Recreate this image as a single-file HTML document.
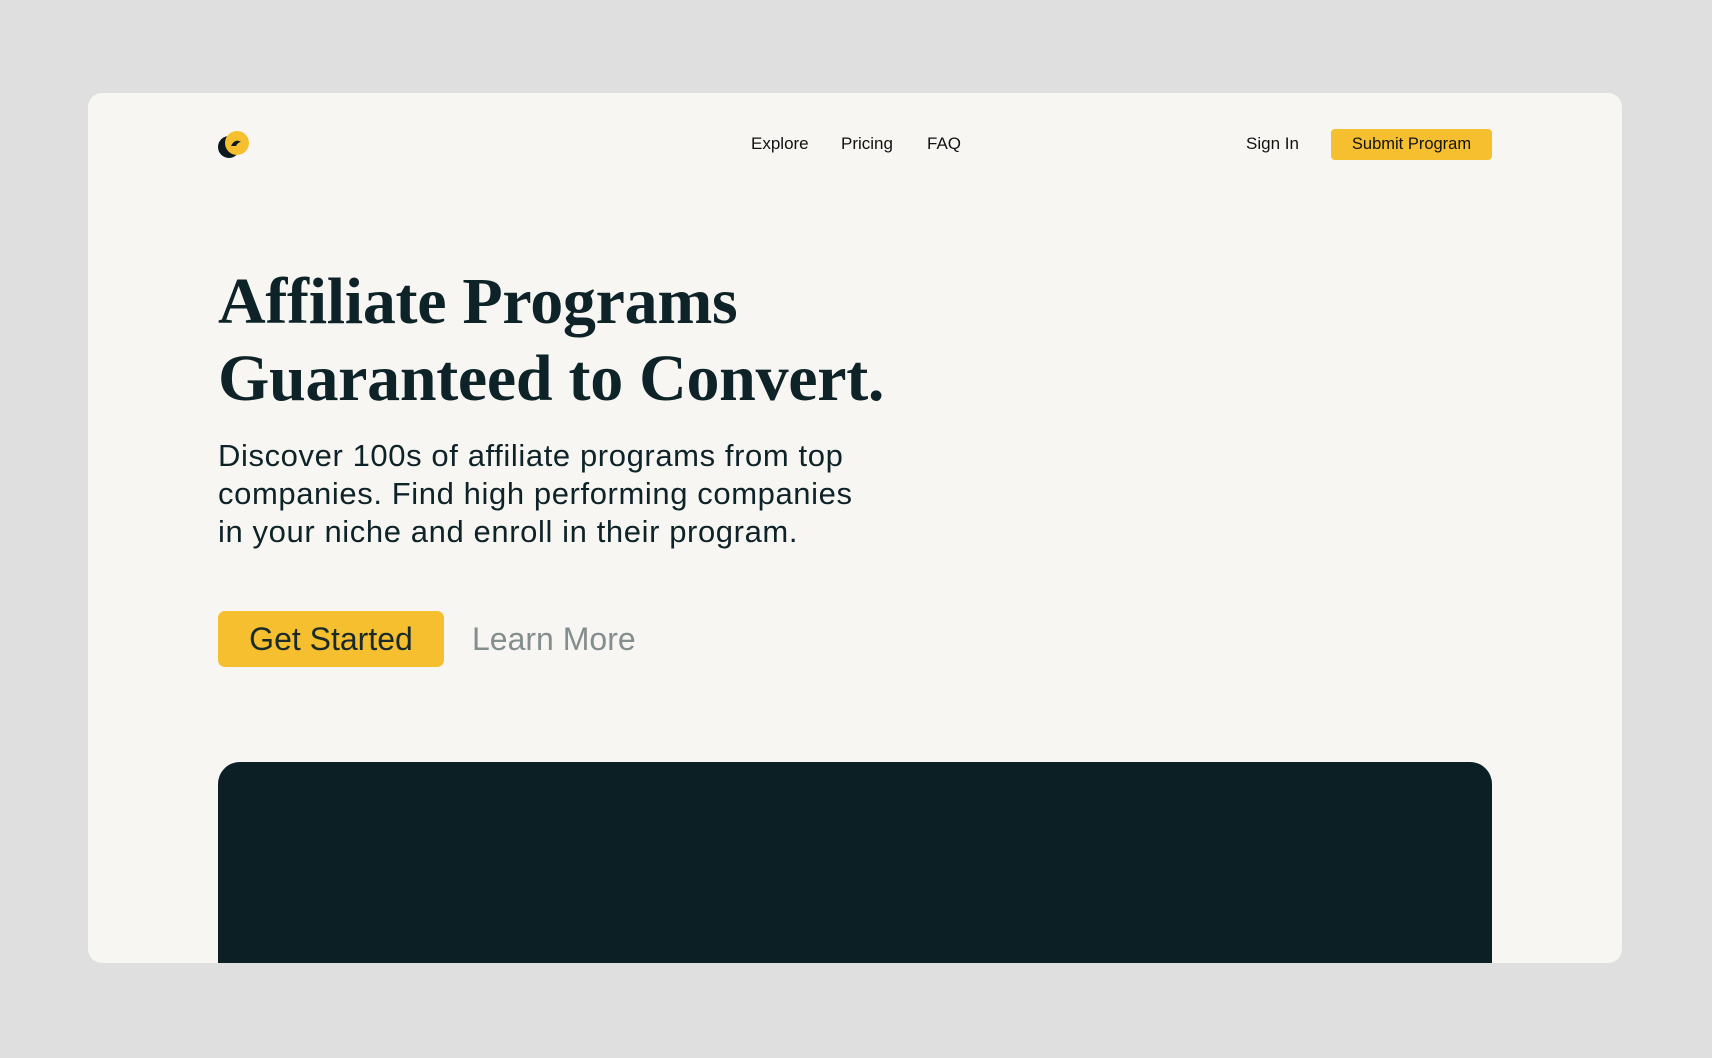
<!DOCTYPE html>
<html><head><meta charset="utf-8"><style>
*{margin:0;padding:0;box-sizing:border-box}
body{width:1712px;height:1058px;background:#dfdfdf;position:relative;overflow:hidden;font-family:"Liberation Sans",sans-serif;color:#0e2328}
.card{position:absolute;left:88px;top:93px;width:1534px;height:870px;background:#f7f6f3;border-radius:14px;overflow:hidden}
.a{position:absolute;white-space:nowrap}
.nav{font-size:17px;color:#111;top:134px}
.btn{position:absolute;left:1331px;top:129px;width:161px;height:31px;background:#f6bf2f;border-radius:4px;font-size:16.5px;line-height:31px;text-align:center;color:#111}
h1{position:absolute;left:218px;top:263px;font-family:"Liberation Serif",serif;font-weight:bold;font-size:66px;line-height:77px;color:#0e2328;letter-spacing:-0.3px}
p{position:absolute;left:218px;top:437px;font-size:31px;line-height:38px;color:#0e2328;letter-spacing:0.6px}
.gs{position:absolute;left:218px;top:611px;width:226px;height:56px;background:#f6bf2f;border-radius:7px;font-size:32px;line-height:56px;text-align:center;color:#1a2a2a}
.lm{position:absolute;left:472px;top:611px;font-size:32px;line-height:56px;color:#848e8e}
</style></head><body>
<div class="card"><div style="position:absolute;left:130px;top:669px;width:1274px;height:300px;background:#0b1f24;border-radius:22px"></div></div>
<svg class="a" style="left:217px;top:130px" width="34" height="30" viewBox="0 0 34 30">
<circle cx="12" cy="17" r="11" fill="#0b1a1c"/>
<circle cx="20" cy="13" r="12" fill="#f6bf2f"/>
<path d="M14 16 q4 -8 10 -4 q-3 0 -5 4 z" fill="#0b1a1c"/>
</svg>
<div class="a nav" style="left:751px">Explore</div>
<div class="a nav" style="left:841px">Pricing</div>
<div class="a nav" style="left:927px">FAQ</div>
<div class="a nav" style="left:1246px">Sign In</div>
<div class="btn">Submit Program</div>
<h1>Affiliate Programs<br>Guaranteed to Convert.</h1>
<p>Discover 100s of affiliate programs from top<br>companies. Find high performing companies<br>in your niche and enroll in their program.</p>
<div class="gs">Get Started</div>
<div class="lm">Learn More</div>
</body></html>
